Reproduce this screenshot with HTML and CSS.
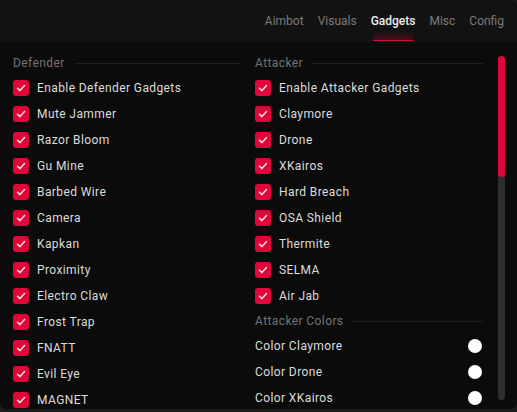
FILE: index.html
```html
<!DOCTYPE html>
<html lang="en">
<head>
  <meta charset="UTF-8" />
  <title>Gadgets</title>
  <link rel="stylesheet" href="styles.css">
</head>
<body>
  <div class="window">
    <nav class="tabs">
      <span class="tab">Aimbot</span>
      <span class="tab">Visuals</span>
      <span class="tab active">Gadgets</span>
      <span class="tab">Misc</span>
      <span class="tab">Config</span>
    </nav>

    <div class="content">
      <div class="columns">
        <div class="column">
          <div class="section-title">Defender</div>
          <label class="check"><span class="box"><svg viewBox="0 0 16 16"><polyline points="4.5,8.3 7,10.6 11.5,5.6"/></svg></span>Enable Defender Gadgets</label>
          <label class="check"><span class="box"><svg viewBox="0 0 16 16"><polyline points="4.5,8.3 7,10.6 11.5,5.6"/></svg></span>Mute Jammer</label>
          <label class="check"><span class="box"><svg viewBox="0 0 16 16"><polyline points="4.5,8.3 7,10.6 11.5,5.6"/></svg></span>Razor Bloom</label>
          <label class="check"><span class="box"><svg viewBox="0 0 16 16"><polyline points="4.5,8.3 7,10.6 11.5,5.6"/></svg></span>Gu Mine</label>
          <label class="check"><span class="box"><svg viewBox="0 0 16 16"><polyline points="4.5,8.3 7,10.6 11.5,5.6"/></svg></span>Barbed Wire</label>
          <label class="check"><span class="box"><svg viewBox="0 0 16 16"><polyline points="4.5,8.3 7,10.6 11.5,5.6"/></svg></span>Camera</label>
          <label class="check"><span class="box"><svg viewBox="0 0 16 16"><polyline points="4.5,8.3 7,10.6 11.5,5.6"/></svg></span>Kapkan</label>
          <label class="check"><span class="box"><svg viewBox="0 0 16 16"><polyline points="4.5,8.3 7,10.6 11.5,5.6"/></svg></span>Proximity</label>
          <label class="check"><span class="box"><svg viewBox="0 0 16 16"><polyline points="4.5,8.3 7,10.6 11.5,5.6"/></svg></span>Electro Claw</label>
          <label class="check"><span class="box"><svg viewBox="0 0 16 16"><polyline points="4.5,8.3 7,10.6 11.5,5.6"/></svg></span>Frost Trap</label>
          <label class="check"><span class="box"><svg viewBox="0 0 16 16"><polyline points="4.5,8.3 7,10.6 11.5,5.6"/></svg></span>FNATT</label>
          <label class="check"><span class="box"><svg viewBox="0 0 16 16"><polyline points="4.5,8.3 7,10.6 11.5,5.6"/></svg></span>Evil Eye</label>
          <label class="check"><span class="box"><svg viewBox="0 0 16 16"><polyline points="4.5,8.3 7,10.6 11.5,5.6"/></svg></span>MAGNET</label>
        </div>

        <div class="column">
          <div class="section-title">Attacker</div>
          <label class="check"><span class="box"><svg viewBox="0 0 16 16"><polyline points="4.5,8.3 7,10.6 11.5,5.6"/></svg></span>Enable Attacker Gadgets</label>
          <label class="check"><span class="box"><svg viewBox="0 0 16 16"><polyline points="4.5,8.3 7,10.6 11.5,5.6"/></svg></span>Claymore</label>
          <label class="check"><span class="box"><svg viewBox="0 0 16 16"><polyline points="4.5,8.3 7,10.6 11.5,5.6"/></svg></span>Drone</label>
          <label class="check"><span class="box"><svg viewBox="0 0 16 16"><polyline points="4.5,8.3 7,10.6 11.5,5.6"/></svg></span>XKairos</label>
          <label class="check"><span class="box"><svg viewBox="0 0 16 16"><polyline points="4.5,8.3 7,10.6 11.5,5.6"/></svg></span>Hard Breach</label>
          <label class="check"><span class="box"><svg viewBox="0 0 16 16"><polyline points="4.5,8.3 7,10.6 11.5,5.6"/></svg></span>OSA Shield</label>
          <label class="check"><span class="box"><svg viewBox="0 0 16 16"><polyline points="4.5,8.3 7,10.6 11.5,5.6"/></svg></span>Thermite</label>
          <label class="check"><span class="box"><svg viewBox="0 0 16 16"><polyline points="4.5,8.3 7,10.6 11.5,5.6"/></svg></span>SELMA</label>
          <label class="check"><span class="box"><svg viewBox="0 0 16 16"><polyline points="4.5,8.3 7,10.6 11.5,5.6"/></svg></span>Air Jab</label>

          <div class="section-title spaced">Attacker Colors</div>
          <div class="color-row">Color Claymore<span class="swatch"></span></div>
          <div class="color-row">Color Drone<span class="swatch"></span></div>
          <div class="color-row">Color XKairos<span class="swatch"></span></div>
        </div>
      </div>

      <div class="scrollbar"><div class="thumb"></div></div>
    </div>
  </div>
</body>
</html>
```

FILE: styles.css
```css
body {
  margin: 0;
  background: #1c1c1c;
  font-family: Roboto, "Liberation Sans", sans-serif;
  font-size: 12px;
  letter-spacing: 0.4px;
}
.window {
  height: 409px;
  background: #0b0b0b;
  border-radius: 0 8px 7px 7px;
  overflow: hidden;
}
.tabs {
  height: 42px;
  background: #121212;
  display: flex;
  justify-content: flex-end;
  padding-right: 6px;
  letter-spacing: 0;
}
.tab {
  padding: 0 7px;
  line-height: 43px;
  color: #7b7b7b;
  position: relative;
}
.tab.active {
  color: #ececec;
  font-weight: 500;
}
.tab.active::after {
  content: "";
  position: absolute;
  left: 9px;
  right: 9px;
  bottom: 1px;
  height: 9px;
  border-bottom: 1px solid #d0103a;
  background: linear-gradient(to bottom, rgba(120, 10, 35, 0), rgba(120, 10, 35, 0.55));
}
.content {
  display: flex;
  height: 367px;
  padding: 12px 12px 0 13px;
  box-sizing: border-box;
}
.columns {
  display: grid;
  grid-template-columns: 228px 228px;
  column-gap: 14px;
  width: 470px;
  overflow: hidden;
}
.section-title {
  display: flex;
  align-items: center;
  gap: 9px;
  height: 18px;
  margin-bottom: 3px;
  color: #737373;
}
.section-title::after {
  content: "";
  flex: 1;
  height: 1px;
  background: #1f1f1f;
}
.section-title.spaced {
  margin-top: 3px;
}
.check {
  display: flex;
  align-items: center;
  gap: 8px;
  height: 26px;
  color: #dcdcdc;
}
.box {
  width: 16px;
  height: 16px;
  border-radius: 3px;
  background: #e0063a;
  flex: none;
}
.box svg {
  display: block;
  width: 16px;
  height: 16px;
  fill: none;
  stroke: #f4dfe3;
  stroke-width: 1.5;
  stroke-linecap: round;
  stroke-linejoin: round;
}
.color-row {
  display: flex;
  align-items: center;
  justify-content: space-between;
  height: 26px;
  color: #dcdcdc;
}
.swatch {
  width: 14px;
  height: 14px;
  margin-right: 1px;
  border-radius: 50%;
  background: #fff;
}
.scrollbar {
  margin: 2px 0 0 15px;
  width: 7px;
  height: 344px;
  border-radius: 4px;
  background: #2e2e2e;
  flex: none;
}
.thumb {
  height: 121px;
  border-radius: 4px;
  background: #e0063a;
}
```
